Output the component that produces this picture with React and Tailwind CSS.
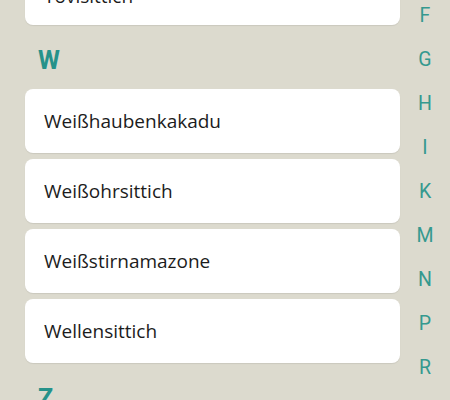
import React from "react";

const sections = [
  { letter: "T", items: ["Tovisittich"] },
  { letter: "W", items: ["Weißhaubenkakadu", "Weißohrsittich", "Weißstirnamazone", "Wellensittich"] },
  { letter: "Z", items: ["Zebrafink"] },
];

const indexLetters = ["F", "G", "H", "I", "K", "M", "N", "P", "R", "S", "T", "W", "Z"];

export default function App() {
  return (
    <div className="w-[450px] h-[400px] overflow-hidden bg-[#dcdace] flex" style={{ fontFamily: "Roboto, sans-serif" }}>
      {/* list (scrolled) */}
      <div className="w-[400px] pl-[25px] -mt-[39px] flex flex-col">
        {sections.map((s, si) => (
          <div key={s.letter} className="flex flex-col">
            {si > 0 && (
              <div className="h-[64px] flex items-center pt-2 pl-[13px] text-[25px] font-bold text-[#26928a]">
                {s.letter}
              </div>
            )}
            <div className="flex flex-col gap-[6px]">
              {s.items.map((name) => (
                <div
                  key={name}
                  className={
                    "h-[64px] bg-white rounded-lg shadow-[0_1px_1px_rgba(0,0,0,0.08)] flex pl-[19px] text-[19px] text-[#1c1c1c] " +
                    (si === 0 ? "items-start pt-[21px]" : "items-center")
                  }
                  style={{ fontFamily: "'Open Sans', sans-serif" }}
                >
                  {name}
                </div>
              ))}
            </div>
          </div>
        ))}
      </div>

      {/* alphabet index */}
      <div className="flex-1 flex flex-col items-center -mt-[6px]">
        {indexLetters.map((l) => (
          <div key={l} className="h-[44px] shrink-0 flex items-center text-[19.5px] text-[#35998f]">
            {l}
          </div>
        ))}
      </div>
    </div>
  );
}
